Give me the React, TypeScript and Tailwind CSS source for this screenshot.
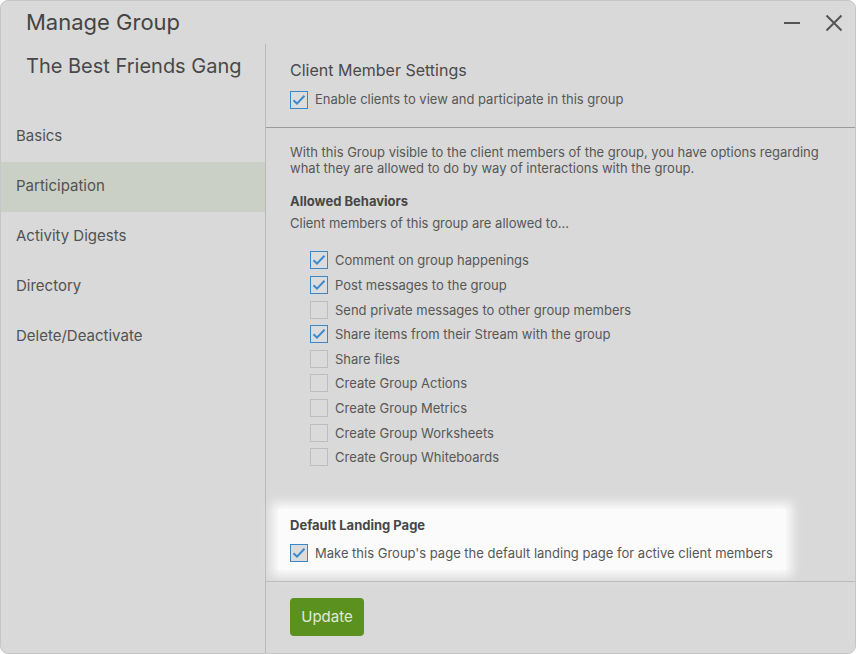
import { useState } from "react";

const NAV = ["Basics", "Participation", "Activity Digests", "Directory", "Delete/Deactivate"];

const BEHAVIORS: { label: string; checked: boolean }[] = [
  { label: "Comment on group happenings", checked: true },
  { label: "Post messages to the group", checked: true },
  { label: "Send private messages to other group members", checked: false },
  { label: "Share items from their Stream with the group", checked: true },
  { label: "Share files", checked: false },
  { label: "Create Group Actions", checked: false },
  { label: "Create Group Metrics", checked: false },
  { label: "Create Group Worksheets", checked: false },
  { label: "Create Group Whiteboards", checked: false },
];

function Checkbox({ checked, onChange }: { checked: boolean; onChange: () => void }) {
  return (
    <button
      onClick={onChange}
      className={
        checked
          ? "w-[18px] h-[18px] shrink-0 border border-[#3b88c8] bg-[#dcdcdc] flex items-center justify-center"
          : "w-[18px] h-[18px] shrink-0 border border-[#bdbdbd] bg-[#dadada]"
      }
    >
      {checked && (
        <svg width="14" height="12" viewBox="0 0 14 12" fill="none">
          <path d="M1.5 6.2 L5 9.6 L12.5 1.8" stroke="#3a8ad0" strokeWidth="2" />
        </svg>
      )}
    </button>
  );
}

export default function App() {
  const [active, setActive] = useState("Participation");
  const [enabled, setEnabled] = useState(true);
  const [landing, setLanding] = useState(true);
  const [behaviors, setBehaviors] = useState(BEHAVIORS);

  const toggle = (i: number) => {
    setBehaviors(behaviors.map((b, j) => (j === i ? { ...b, checked: !b.checked } : b)));
  };

  return (
    <div className="w-[856px] h-[654px] bg-white" style={{ fontFamily: "Inter, 'Noto Sans', sans-serif" }}>
      <div className="w-full h-full flex flex-col bg-[#d9d9d9] border border-[#c6c6c6] rounded-[8px] overflow-hidden text-[#575757]">
        {/* Header */}
        <div className="h-[43px] flex items-center shrink-0 pl-[25px] pr-[12px]">
          <h1 className="text-[22px] leading-[26px] text-[#444] flex-1 -mt-[1px]">Manage Group</h1>
          <button className="w-[16px] h-[16px] mr-[25px] flex items-center">
            <div className="w-[16px] h-[2px] bg-[#555]" />
          </button>
          <button className="w-[18px] h-[18px]">
            <svg width="18" height="18" viewBox="0 0 18 18">
              <path d="M1.5 1.5 L16.5 16.5 M16.5 1.5 L1.5 16.5" stroke="#555" strokeWidth="2" />
            </svg>
          </button>
        </div>

        <div className="flex-1 flex min-h-0">
          {/* Sidebar */}
          <div className="w-[265px] shrink-0 border-r border-[#b9b9b9] flex flex-col">
            <div className="h-[68px] pt-[10px] pl-[25px] text-[20px] leading-[24px] text-[#484848]">
              The Best Friends Gang
            </div>
            {NAV.map((n) => (
              <button
                key={n}
                onClick={() => setActive(n)}
                className={
                  "h-[50px] text-left pl-[15px] pb-[2px] text-[15px] text-[#525252] " +
                  (active === n ? "bg-[#cbd0c6]" : "")
                }
              >
                {n}
              </button>
            ))}
          </div>

          {/* Content */}
          <div className="flex-1 flex flex-col min-w-0">
            <div className="h-[84px] shrink-0 border-b border-[#9b9b9b] pl-[24px] pt-[15px]">
              <h2 className="text-[16px] leading-[22px] text-[#4a4a4a]">Client Member Settings</h2>
              <label className="flex items-center gap-[7px] mt-[9px] text-[13px]">
                <Checkbox checked={enabled} onChange={() => setEnabled(!enabled)} />
                Enable clients to view and participate in this group
              </label>
            </div>

            <div className="flex-1 pl-[24px] pr-[20px] pt-[16px] text-[13px] leading-[16px]">
              <p>
                With this Group visible to the client members of the group, you have options regarding
                <br />
                what they are allowed to do by way of interactions with the group.
              </p>
              <h3 className="mt-[17px] font-bold text-[#474747]">Allowed Behaviors</h3>
              <p className="mt-[6px]">Client members of this group are allowed to...</p>

              <div className="mt-[17px] pl-[20px] flex flex-col">
                {behaviors.map((b, i) => (
                  <label key={b.label} className="h-[24.625px] flex items-center gap-[7px]">
                    <Checkbox checked={b.checked} onChange={() => toggle(i)} />
                    {b.label}
                  </label>
                ))}
              </div>

              <div className="mt-[39px] -ml-[12px] w-[508px] bg-white/90 shadow-[0_0_10px_6px_rgba(255,255,255,0.9)] pl-[12px] pt-[8px] pb-[8px]">
                <h3 className="font-bold text-[#474747]">Default Landing Page</h3>
                <label className="flex items-center gap-[7px] mt-[11px]">
                  <Checkbox checked={landing} onChange={() => setLanding(!landing)} />
                  Make this Group's page the default landing page for active client members
                </label>
              </div>
            </div>

            <div className="h-[72px] shrink-0 border-t border-[#bcbcbc] pl-[24px] pt-[16px]">
              <button className="w-[74px] h-[38px] rounded-[4px] bg-[#5b911f] text-[#e1ead7] text-[15px]">
                Update
              </button>
            </div>
          </div>
        </div>
      </div>
    </div>
  );
}
